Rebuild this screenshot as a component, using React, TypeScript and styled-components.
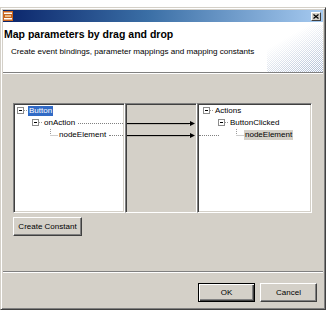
import styled, { createGlobalStyle } from 'styled-components';

const GlobalStyle = createGlobalStyle`
  body {
    margin: 0;
    background: #fff;
    font-family: 'Liberation Sans', Arial, sans-serif;
    font-size: 8px;
    color: #000;
  }
`;

type TreeNode = {
  label: string;
  level: number;
  kind: 'open' | 'leaf';
  state?: 'active' | 'inactive';
  lead?: boolean;
  incoming?: boolean;
};

const sourceNodes: TreeNode[] = [
  { label: 'Button', level: 0, kind: 'open', state: 'active' },
  { label: 'onAction', level: 1, kind: 'open', lead: true },
  { label: 'nodeElement', level: 2, kind: 'leaf', lead: true },
];

const targetNodes: TreeNode[] = [
  { label: 'Actions', level: 0, kind: 'open' },
  { label: 'ButtonClicked', level: 1, kind: 'open' },
  { label: 'nodeElement', level: 2, kind: 'leaf', state: 'inactive', incoming: true },
];

const Expander = ({ kind }: { kind: 'open' | 'leaf' }) =>
  kind === 'open' ? (
    <svg width="11" height="12" viewBox="0 0 11 12">
      <rect x="0.5" y="2.5" width="6" height="6" fill="#fff" stroke="#8c8c8c" />
      <line x1="2" y1="5.5" x2="5" y2="5.5" stroke="#000" />
      <line x1="7" y1="5.5" x2="11" y2="5.5" stroke="#9a9a9a" strokeDasharray="1 1" />
    </svg>
  ) : (
    <svg width="11" height="12" viewBox="0 0 11 12">
      <line x1="3.5" y1="0" x2="3.5" y2="6" stroke="#9a9a9a" strokeDasharray="1 1" />
      <line x1="3.5" y1="6.5" x2="11" y2="6.5" stroke="#9a9a9a" strokeDasharray="1 1" />
    </svg>
  );

const Tree = ({ nodes, indent }: { nodes: TreeNode[]; indent: number }) => (
  <TreeList>
    {nodes.map((node) => (
      <TreeRow key={node.label + node.level} $pad={indent + node.level * 15}>
        {node.incoming && <IncomingLead />}
        <Expander kind={node.kind} />
        <NodeLabel $state={node.state}>{node.label}</NodeLabel>
        {node.lead && <Lead />}
      </TreeRow>
    ))}
  </TreeList>
);

const App = () => {
  return (
    <>
      <GlobalStyle />
      <Window>
        <TitleBar>
          <svg width="10" height="10" viewBox="0 0 10 10">
            <rect x="0" y="0" width="10" height="10" fill="#c8641e" />
            <rect x="1" y="1.5" width="8" height="1.5" fill="#fff" />
            <rect x="2" y="4.3" width="6" height="1.5" fill="#f6d7a8" />
            <rect x="1" y="7" width="8" height="1.5" fill="#fff" />
          </svg>
          <CloseButton>
            <svg width="6" height="5" viewBox="0 0 6 5">
              <path d="M0.5 0.5 L5.5 4.5 M5.5 0.5 L0.5 4.5" stroke="#000" strokeWidth="1.2" />
            </svg>
          </CloseButton>
        </TitleBar>

        <Header>
          <HeaderText>
            <Title>Map parameters by drag and drop</Title>
            <Subtitle>Create event bindings, parameter mappings and mapping constants</Subtitle>
          </HeaderText>
          <BannerArt />
        </Header>
        <Separator />

        <Content>
          <MappingArea>
            <TreePanel $width={112}>
              <Tree nodes={sourceNodes} indent={2} />
            </TreePanel>
            <LinkPanel>
              <svg width="68" height="106" viewBox="0 0 68 106">
                <line x1="0" y1="18.5" x2="64" y2="18.5" stroke="#000" />
                <line x1="0" y1="19.5" x2="62" y2="19.5" stroke="#b8b4ac" />
                <polygon points="63,16 68,18.5 63,21" fill="#000" />
                <line x1="0" y1="30.5" x2="64" y2="30.5" stroke="#000" />
                <line x1="0" y1="31.5" x2="62" y2="31.5" stroke="#b8b4ac" />
                <polygon points="63,28 68,30.5 63,33" fill="#000" />
              </svg>
            </LinkPanel>
            <TreePanel $width={115}>
              <Tree nodes={targetNodes} indent={4} />
            </TreePanel>
          </MappingArea>
          <PushButton $width={69}>Create Constant</PushButton>
        </Content>

        <Separator />
        <ButtonBar>
          <PushButton $width={57} $default>
            OK
          </PushButton>
          <PushButton $width={57}>Cancel</PushButton>
        </ButtonBar>
      </Window>
    </>
  );
};

export default App;

const Window = styled.div`
  margin-top: 7px;
  width: 326px;
  height: 303px;
  box-sizing: border-box;
  background: #d4d0c8;
  border: 1px solid;
  border-color: #d4d0c8 #404040 #404040 #d4d0c8;
  box-shadow: inset 1px 1px #fff, inset -1px -1px #808080;
  padding: 2px;
  display: flex;
  flex-direction: column;
`;

const TitleBar = styled.div`
  height: 12px;
  flex: none;
  display: flex;
  align-items: center;
  justify-content: space-between;
  padding: 0 2px 0 0;
  background: linear-gradient(to right, #0a246a 0%, #3a6ea5 45%, #a6caf0 100%);
`;

const CloseButton = styled.div`
  width: 10px;
  height: 9px;
  box-sizing: border-box;
  background: #d4d0c8;
  border: 1px solid;
  border-color: #fff #404040 #404040 #fff;
  display: flex;
  align-items: center;
  justify-content: center;
`;

const Header = styled.div`
  height: 50px;
  flex: none;
  background: #fff;
  display: flex;
`;

const HeaderText = styled.div`
  flex: 1;
  padding: 6px 0 0 1px;
`;

const Title = styled.div`
  font-size: 10.5px;
  line-height: 12px;
  font-weight: bold;
`;

const Subtitle = styled.div`
  margin-top: 7px;
  padding-left: 7px;
  font-size: 8.1px;
  line-height: 10px;
`;

const BannerArt = styled.div`
  width: 56px;
  height: 47px;
  align-self: flex-end;
  background: repeating-conic-gradient(#9fb0cc 0 25%, transparent 0 50%) 0 0 / 2px 2px;
  -webkit-mask-image: linear-gradient(150deg, transparent 30%, rgba(0, 0, 0, 0.9) 100%);
  mask-image: linear-gradient(150deg, transparent 30%, rgba(0, 0, 0, 0.9) 100%);
`;

const Separator = styled.div`
  height: 2px;
  flex: none;
  box-sizing: border-box;
  border-top: 1px solid #808080;
  border-bottom: 1px solid #fff;
`;

const Content = styled.div`
  flex: 1;
  display: flex;
  flex-direction: column;
  align-items: flex-start;
  gap: 4px;
  padding: 29px 11px 0 10px;
`;

const MappingArea = styled.div`
  display: flex;
  height: 110px;
`;

const sunken = `
  box-sizing: border-box;
  border: 1px solid;
  border-color: #808080 #fff #fff #808080;
  box-shadow: inset 1px 1px #404040, inset -1px -1px #d4d0c8;
  padding: 1px;
`;

const TreePanel = styled.div<{ $width: number }>`
  ${sunken}
  width: ${(p) => p.$width}px;
  background: #fff;
`;

const LinkPanel = styled.div`
  ${sunken}
  width: 72px;
  background: #d4d0c8;
  display: flex;
`;

const TreeList = styled.div`
  display: flex;
  flex-direction: column;
`;

const TreeRow = styled.div<{ $pad: number }>`
  position: relative;
  height: 12px;
  display: flex;
  align-items: center;
  padding-left: ${(p) => p.$pad}px;

  svg {
    flex: none;
  }
`;

const NodeLabel = styled.span<{ $state?: 'active' | 'inactive' }>`
  padding: 0 1px;
  line-height: 10px;
  white-space: nowrap;
  background: ${(p) =>
    p.$state === 'active' ? '#316ac5' : p.$state === 'inactive' ? '#d4d0c8' : 'transparent'};
  color: ${(p) => (p.$state === 'active' ? '#fff' : '#000')};
`;

const Lead = styled.span`
  flex: 1;
  margin-left: 2px;
  border-top: 1px dotted #808080;
`;

const IncomingLead = styled.span`
  position: absolute;
  left: 0;
  top: 6px;
  width: 20px;
  border-top: 1px dotted #808080;
`;

const PushButton = styled.button<{ $width: number; $default?: boolean }>`
  width: ${(p) => p.$width}px;
  height: 19px;
  flex: none;
  box-sizing: border-box;
  padding: 0;
  font-family: 'Liberation Sans', Arial, sans-serif;
  font-size: 8px;
  color: #000;
  background: #d4d0c8;
  border: 1px solid;
  border-color: ${(p) => (p.$default ? '#000' : '#fff #404040 #404040 #fff')};
  box-shadow: ${(p) =>
    p.$default
      ? 'inset 1px 1px #fff, inset -1px -1px #404040, inset -2px -2px #808080'
      : 'inset -1px -1px #808080'};
`;

const ButtonBar = styled.div`
  display: flex;
  justify-content: flex-end;
  gap: 5px;
  padding: 10px 6px 5px 0;
`;
